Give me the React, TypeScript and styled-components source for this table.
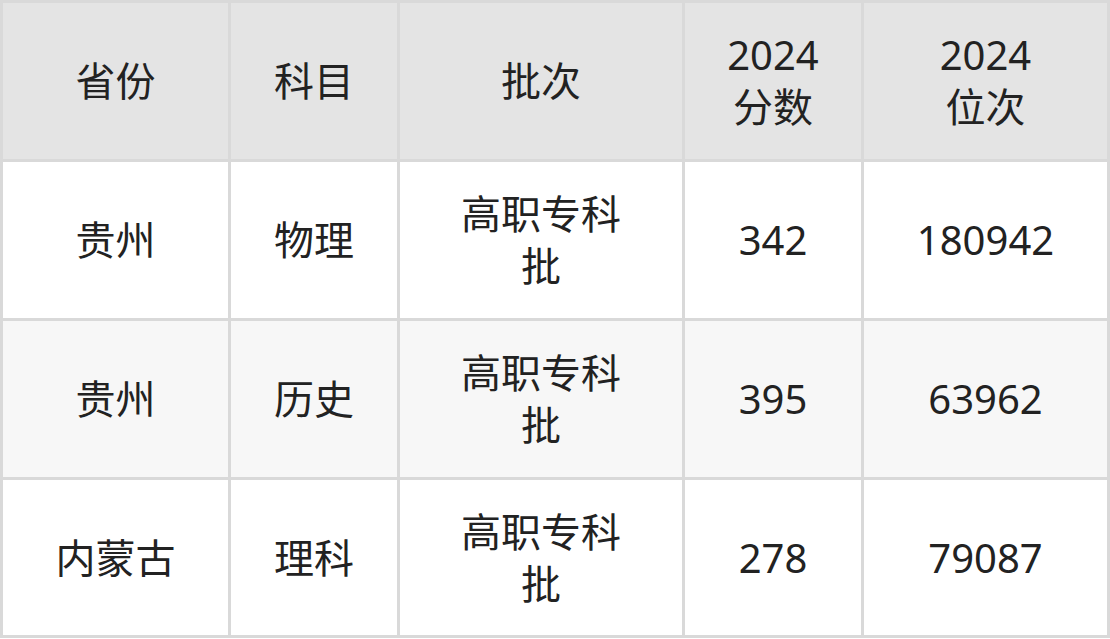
import React from 'react'
import styled, { createGlobalStyle } from 'styled-components'

const GlobalStyle = createGlobalStyle`
  html, body {
    margin: 0;
    padding: 0;
    background: #ffffff;
  }
`

const Table = styled.div`
  display: grid;
  grid-template-columns: 225px 166px 282px 176px 243px;
  grid-template-rows: 156px 156px 156px 155px;
  gap: 3px;
  padding: 3px;
  width: 1110px;
  box-sizing: border-box;
  background-color: #d9d9d9;
  font-family: 'Noto Sans', 'Noto Sans CJK SC', sans-serif;
  color: #222222;
`

const Cell = styled.div<{ $bg?: string }>`
  display: flex;
  align-items: center;
  justify-content: center;
  text-align: center;
  font-size: 40px;
  line-height: 52px;
  background-color: ${({ $bg }) => $bg || '#ffffff'};
  white-space: pre-line;
`

const HeadCell = styled(Cell)`
  background-color: #e4e4e4;
`

const headers = ['省份', '科目', '批次', '2024\n分数', '2024\n位次']

const rows = [
  ['贵州', '物理', '高职专科\n批', '342', '180942'],
  ['贵州', '历史', '高职专科\n批', '395', '63962'],
  ['内蒙古', '理科', '高职专科\n批', '278', '79087'],
]

export default function App() {
  return (
    <>
      <GlobalStyle />
      <Table>
        {headers.map((h) => (
          <HeadCell key={h}>{h}</HeadCell>
        ))}
        {rows.map((row, i) =>
          row.map((v, j) => (
            <Cell key={`${i}-${j}`} $bg={i % 2 === 1 ? '#f7f7f7' : '#ffffff'}>
              {v}
            </Cell>
          ))
        )}
      </Table>
    </>
  )
}
